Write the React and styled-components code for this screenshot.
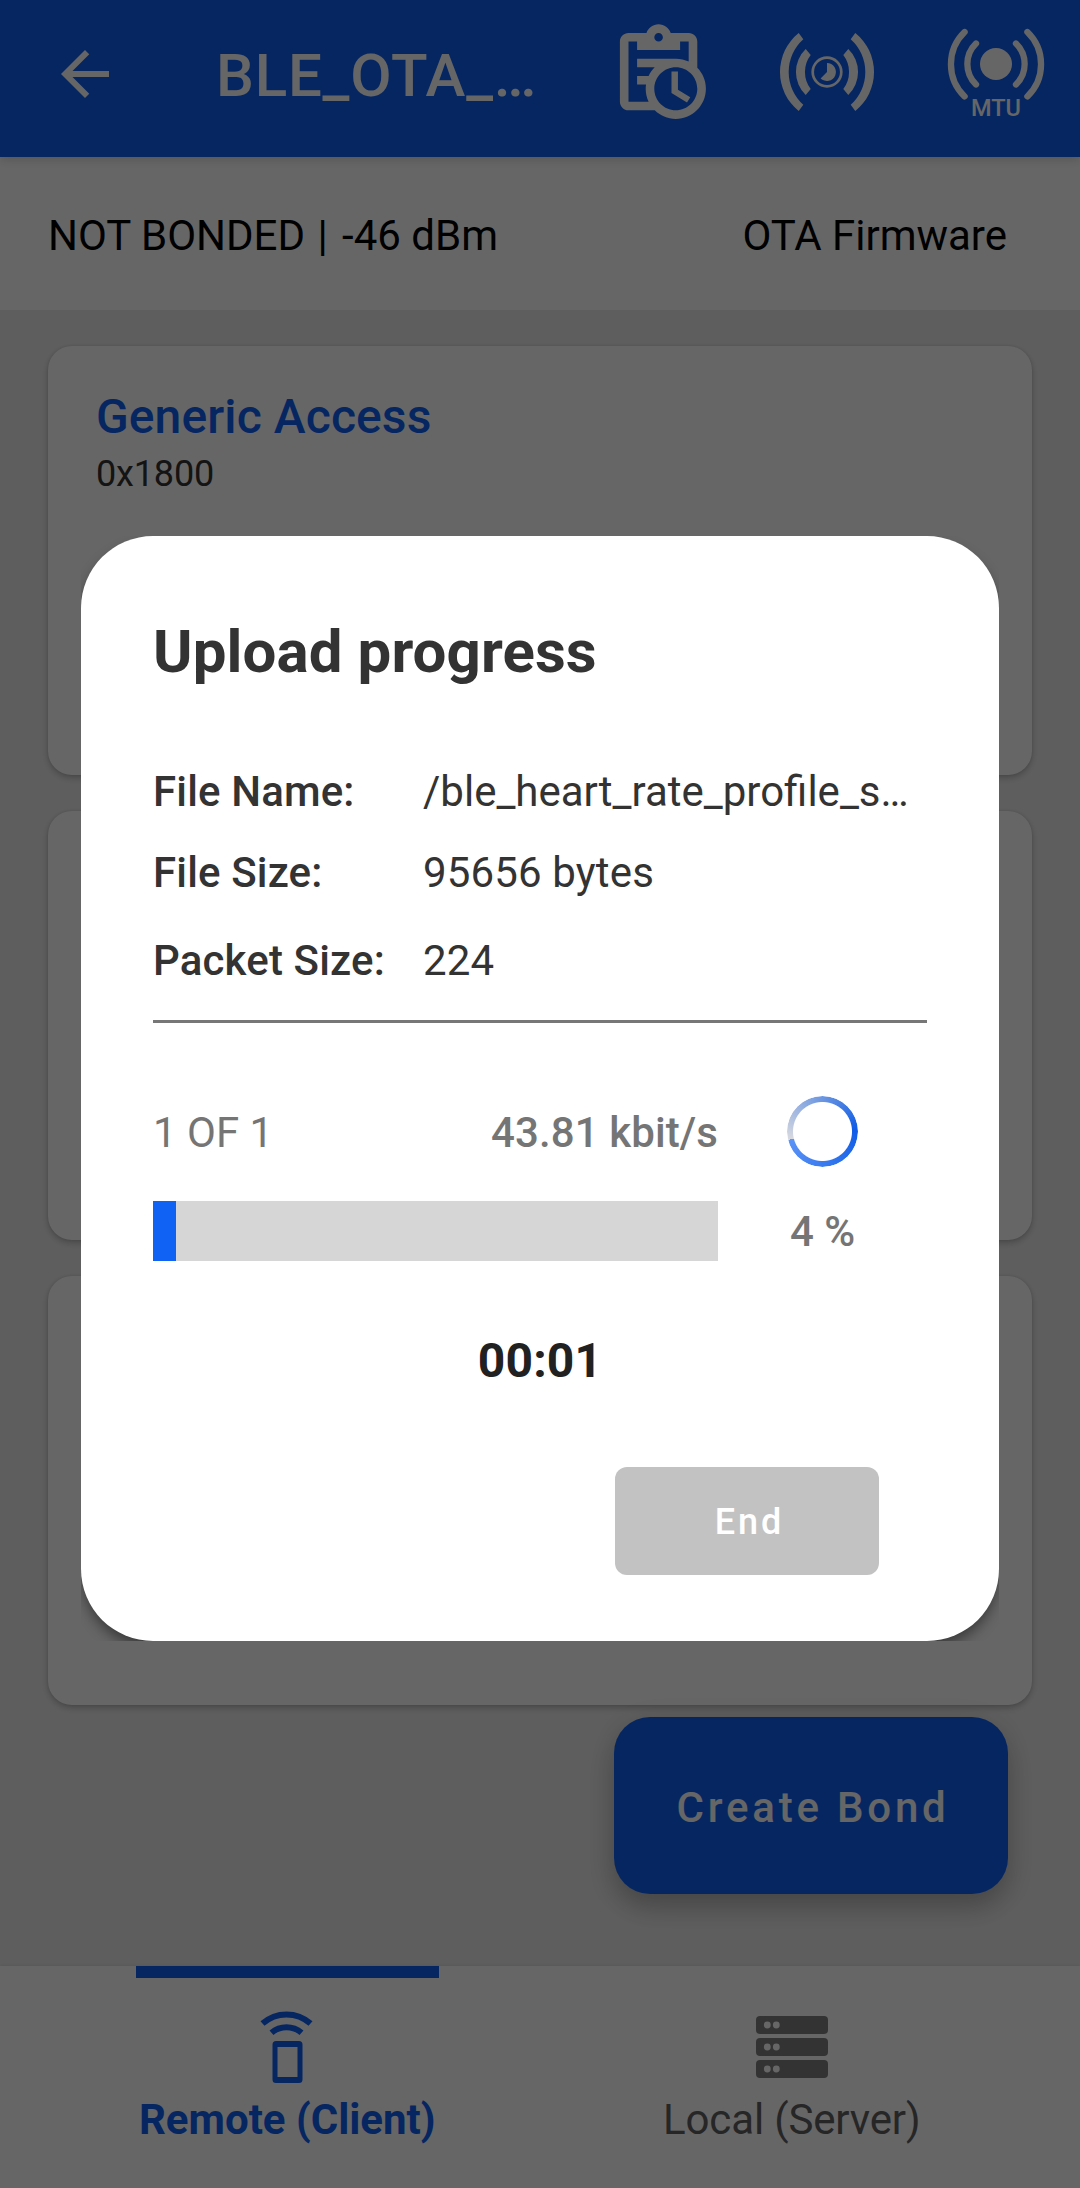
import React from 'react';
import styled, { createGlobalStyle } from 'styled-components';

const PRIMARY = '#0f60f6';

const GlobalStyle = createGlobalStyle`
  *, *::before, *::after { box-sizing: border-box; }
  body {
    margin: 0;
    font-family: Roboto, "Noto Sans", sans-serif;
    background: #ebebeb;
  }
`;

const Screen = styled.div`
  position: relative;
  display: flex;
  flex-direction: column;
  width: 1080px;
  height: 2188px;
  overflow: hidden;
  background: #ebebeb;
`;

const AppBar = styled.header`
  position: relative;
  z-index: 1;
  display: flex;
  align-items: center;
  height: 157px;
  padding: 0 0 13px 49px;
  background: ${PRIMARY};
  color: #fff;
  box-shadow: 0 2px 10px rgba(0, 0, 0, 0.18);
`;

const BackIcon = styled.svg`
  width: 72px;
  height: 72px;
  margin-top: 3px;
  fill: currentColor;
`;

const Title = styled.h1`
  flex: 1;
  margin: 0;
  padding: 7px 0 0 95px;
  font-size: 60px;
  font-weight: 500;
  line-height: 70px;
  letter-spacing: 0.8px;
  white-space: nowrap;
`;

const Actions = styled.div`
  display: flex;
`;

const Action = styled.div`
  display: flex;
  justify-content: center;
  width: 168.5px;
`;

const ActionIcon = styled.svg`
  width: ${(p) => p.$size || 104}px;
  height: ${(p) => p.$size || 104}px;
  fill: currentColor;
`;

const StatusBar = styled.div`
  display: flex;
  align-items: center;
  justify-content: space-between;
  height: 153px;
  padding: 4px 73px 0 48px;
  background: #fff;
  color: #000;
  font-size: 42px;
  line-height: 50px;
`;

const Separator = styled.span`
  margin: 0 4px 0 2px;
`;

const ServiceList = styled.main`
  flex: 1;
  display: flex;
  flex-direction: column;
  gap: 36px;
  padding: 36px 48px 0;
`;

const ServiceCard = styled.section`
  height: 429px;
  flex: none;
  padding: 43px 48px;
  border-radius: 24px;
  background: #fff;
  box-shadow: 0 3px 6px rgba(0, 0, 0, 0.22), 0 0 3px rgba(0, 0, 0, 0.1);
`;

const ServiceName = styled.h2`
  margin: 0;
  color: ${PRIMARY};
  font-size: 48px;
  font-weight: 500;
  line-height: 56px;
  letter-spacing: 0.1px;
`;

const ServiceId = styled.div`
  margin-top: 8px;
  color: #333;
  font-size: 36px;
  line-height: 42px;
  letter-spacing: -0.15px;
`;

const BondButton = styled.button`
  align-self: flex-end;
  width: 394px;
  height: 177px;
  margin: -24px 24px 0 0;
  padding: 4px 0 0 4px;
  border: 0;
  border-radius: 36px;
  background: ${PRIMARY};
  color: #fff;
  font: 500 42px/50px Roboto, sans-serif;
  letter-spacing: 3.8px;
  box-shadow: 0 14px 24px rgba(0, 0, 0, 0.2), 0 4px 36px rgba(0, 0, 0, 0.08);
`;

const BottomNav = styled.nav`
  display: flex;
  height: 222px;
  padding: 0 36px 0 35px;
  background: #fff;
  box-shadow: 0 0 4px rgba(0, 0, 0, 0.1);
`;

const NavItem = styled.div`
  flex: 1;
  display: flex;
  flex-direction: column;
  align-items: center;
  color: ${(p) => (p.$active ? PRIMARY : '#606060')};
`;

const Indicator = styled.div`
  width: 303px;
  height: 12px;
  background: ${(p) => (p.$active ? PRIMARY : 'transparent')};
`;

const NavIcon = styled.svg`
  width: 72px;
  height: 72px;
  margin-top: 33px;
`;

const NavLabel = styled.div`
  margin-top: 12px;
  font-size: 42px;
  font-weight: ${(p) => (p.$active ? 700 : 400)};
  line-height: 50px;
  letter-spacing: ${(p) => (p.$active ? 0 : -0.15)}px;
`;

const Scrim = styled.div`
  position: absolute;
  inset: 0;
  z-index: 2;
  display: flex;
  align-items: flex-start;
  justify-content: center;
  padding-top: 536px;
  background: rgba(0, 0, 0, 0.6);
`;

const DialogWindow = styled.div`
  width: 918px;
  height: 1105px;
  overflow: hidden;
`;

const Dialog = styled.div`
  display: flex;
  flex-direction: column;
  height: 100%;
  padding: 81px 72px 66px;
  border-radius: 72px;
  background: #fff;
  color: #333;
  box-shadow: 0 8px 14px -2px rgba(0, 0, 0, 0.45);
`;

const DialogTitle = styled.h2`
  margin: 0 0 80px;
  font-size: 60px;
  font-weight: 700;
  line-height: 70px;
  letter-spacing: 0.1px;
`;

const Detail = styled.div`
  display: flex;
  margin-bottom: ${(p) => p.$gap}px;
  font-size: 42px;
  line-height: 50px;
  white-space: nowrap;
`;

const DetailLabel = styled.div`
  flex: none;
  width: 270px;
  font-weight: 500;
  letter-spacing: 0.15px;
`;

const DetailValue = styled.div`
  font-weight: 400;
  letter-spacing: ${(p) => p.$tracking || 0}px;
`;

const Divider = styled.div`
  height: 3px;
  background: #777;
`;

const Progress = styled.div`
  display: grid;
  grid-template-columns: 565px 209px;
  grid-template-rows: 71px 60px;
  row-gap: 34px;
  align-items: center;
  margin-top: 73px;
  color: #757575;
  font-size: 42px;
  line-height: 50px;
`;

const Counters = styled.div`
  display: flex;
  justify-content: space-between;
  padding-top: 2px;
`;

const Speed = styled.span`
  font-weight: 500;
  letter-spacing: 0.1px;
`;

const Spinner = styled.div`
  justify-self: center;
  width: 71px;
  height: 71px;
  border-radius: 50%;
  background: conic-gradient(
    from 256deg,
    #d9dadf 0deg,
    #7a9fe0 90deg,
    #0f5ce6 190deg,
    #5c94f7 360deg
  );
  mask: radial-gradient(circle, transparent 29px, #000 30px);
`;

const Track = styled.div`
  height: 60px;
  background: #d6d6d6;
`;

const Fill = styled.div`
  width: 23px;
  height: 100%;
  background: #1062f5;
`;

const Percent = styled.div`
  justify-self: center;
  padding-top: 2px;
  font-weight: 500;
`;

const Timer = styled.div`
  margin-top: 71px;
  color: #212121;
  font-size: 48px;
  font-weight: 700;
  line-height: 58px;
  letter-spacing: 0.2px;
  text-align: center;
`;

const EndButton = styled.button`
  align-self: flex-end;
  width: 264px;
  height: 108px;
  margin: 77px 48px 0 0;
  padding: 2px 0 0 5px;
  border: 0;
  border-radius: 12px;
  background: #c2c2c2;
  color: #fff;
  font: 500 36px/42px Roboto, sans-serif;
  letter-spacing: 2.9px;
`;

function ClipboardClockIcon() {
  return (
    <ActionIcon $size={103.2} viewBox="0 0 24 24">
      <path d="M21 11.11V5C21 3.9 20.11 3 19 3H14.82C14.4 1.84 13.3 1 12 1S9.6 1.84 9.18 3H5C3.9 3 3 3.9 3 5V19C3 20.11 3.9 21 5 21H11.11C12.37 22.24 14.09 23 16 23C19.87 23 23 19.87 23 16C23 14.09 22.24 12.37 21 11.11M12 3C12.55 3 13 3.45 13 4S12.55 5 12 5 11 4.55 11 4 11.45 3 12 3M5 19V5H7V7H17V5H19V9.68C18.09 9.25 17.08 9 16 9H7V11H11.1C10.5 11.57 10.04 12.25 9.68 13H7V15H9.08C9.03 15.33 9 15.66 9 16C9 17.08 9.25 18.09 9.68 19H5M16 21C13.24 21 11 18.76 11 16C11 13.24 13.24 11 16 11C18.76 11 21 13.24 21 16C21 18.76 18.76 21 16 21M16.5 16.25L19.36 17.94L18.61 19.16L15 17V12H16.5V16.25Z" />
    </ActionIcon>
  );
}

function ConnectionIntervalIcon() {
  const wave = (
    <>
      <path d="M-28.3-39A50 50 0 0 0-28.3 39L-23.7 32.7A43.9 43.9 0 0 1-23.7-32.7Z" />
      <path d="M-21.3-23A32 32 0 0 0-21.3 23L-16.3 17A28 28 0 0 1-16.3-17Z" />
    </>
  );
  return (
    <ActionIcon viewBox="-52 -52 104 104">
      {wave}
      <g transform="scale(-1 1)">{wave}</g>
      <circle r="14.3" fill="none" stroke="currentColor" strokeWidth="2.7" />
      <path d="M0 0V-9A9 9 0 1 1-6.4 6.4Z" />
    </ActionIcon>
  );
}

function MtuIcon() {
  return (
    <ActionIcon viewBox="-52 -44 104 104">
      <circle r="16" />
      <g fill="none" stroke="currentColor" strokeWidth="6.3" strokeLinecap="round">
        <path d="M-20-20.5A28.6 28.6 0 0 0-20 20.5M20-20.5A28.6 28.6 0 0 1 20 20.5" />
        <path d="M-31.4-32A44.8 44.8 0 0 0-31.4 32.4M31.4-32A44.8 44.8 0 0 1 31.4 32.4" />
      </g>
      <text x="0" y="51.7" fontSize="23.5" fontWeight="500" textAnchor="middle">
        MTU
      </text>
    </ActionIcon>
  );
}

function RemoteIcon() {
  return (
    <NavIcon viewBox="0 0 72 72" fill="none" stroke="currentColor">
      <path d="M11.5 12.6A36 36 0 0 1 59.5 12.6" strokeWidth="6" />
      <path d="M20.5 21.8A23 23 0 0 1 50.5 21.8" strokeWidth="6" />
      <path
        fill="currentColor"
        stroke="none"
        fillRule="evenodd"
        d="M25 30H48Q51.500 30 51.500 33.500V68.500Q51.500 72 48 72H25Q21.500 72 21.500 68.500V33.500Q21.500 30 25 30ZM26.500 36V66H46.500V36Z"
      />
    </NavIcon>
  );
}

function ServerIcon() {
  return (
    <NavIcon viewBox="0 0 72 72" fill="#808080">
      {[5, 27, 49].map((y) => (
        <g key={y}>
          <rect x="0" y={y} width="72" height="18" rx="4" />
          <circle cx="11.300" cy={y + 9} r="3.400" fill="#fff" />
          <circle cx="20.300" cy={y + 9} r="3.400" fill="#fff" />
        </g>
      ))}
    </NavIcon>
  );
}

export default function App() {
  return (
    <>
      <GlobalStyle />
      <Screen>
        <AppBar>
          <BackIcon viewBox="0 0 24 24">
            <path d="M20 11H7.830l5.590-5.590L12 4l-8 8 8 8 1.410-1.410L7.830 13H20v-2z" />
          </BackIcon>
          <Title>BLE_OTA_…</Title>
          <Actions>
            <Action><ClipboardClockIcon /></Action>
            <Action><ConnectionIntervalIcon /></Action>
            <Action><MtuIcon /></Action>
          </Actions>
        </AppBar>
        <StatusBar>
          <span>NOT BONDED <Separator>|</Separator> -46 dBm</span>
          <span>OTA Firmware</span>
        </StatusBar>
        <ServiceList>
          <ServiceCard>
            <ServiceName>Generic Access</ServiceName>
            <ServiceId>0x1800</ServiceId>
          </ServiceCard>
          <ServiceCard />
          <ServiceCard />
          <BondButton>Create Bond</BondButton>
        </ServiceList>
        <BottomNav>
          <NavItem $active>
            <Indicator $active />
            <RemoteIcon />
            <NavLabel $active>Remote (Client)</NavLabel>
          </NavItem>
          <NavItem>
            <Indicator />
            <ServerIcon />
            <NavLabel>Local (Server)</NavLabel>
          </NavItem>
        </BottomNav>
        <Scrim>
          <DialogWindow>
            <Dialog>
              <DialogTitle>Upload progress</DialogTitle>
              <Detail $gap={31}>
                <DetailLabel>File Name:</DetailLabel>
                <DetailValue>/ble_heart_rate_profile_s…</DetailValue>
              </Detail>
              <Detail $gap={38}>
                <DetailLabel>File Size:</DetailLabel>
                <DetailValue $tracking={0.15}>95656 bytes</DetailValue>
              </Detail>
              <Detail $gap={34}>
                <DetailLabel>Packet Size:</DetailLabel>
                <DetailValue $tracking={0.15}>224</DetailValue>
              </Detail>
              <Divider />
              <Progress>
                <Counters>
                  <span>1 OF 1</span>
                  <Speed>43.81 kbit/s</Speed>
                </Counters>
                <Spinner />
                <Track><Fill /></Track>
                <Percent>4 %</Percent>
              </Progress>
              <Timer>00:01</Timer>
              <EndButton>End</EndButton>
            </Dialog>
          </DialogWindow>
        </Scrim>
      </Screen>
    </>
  );
}
